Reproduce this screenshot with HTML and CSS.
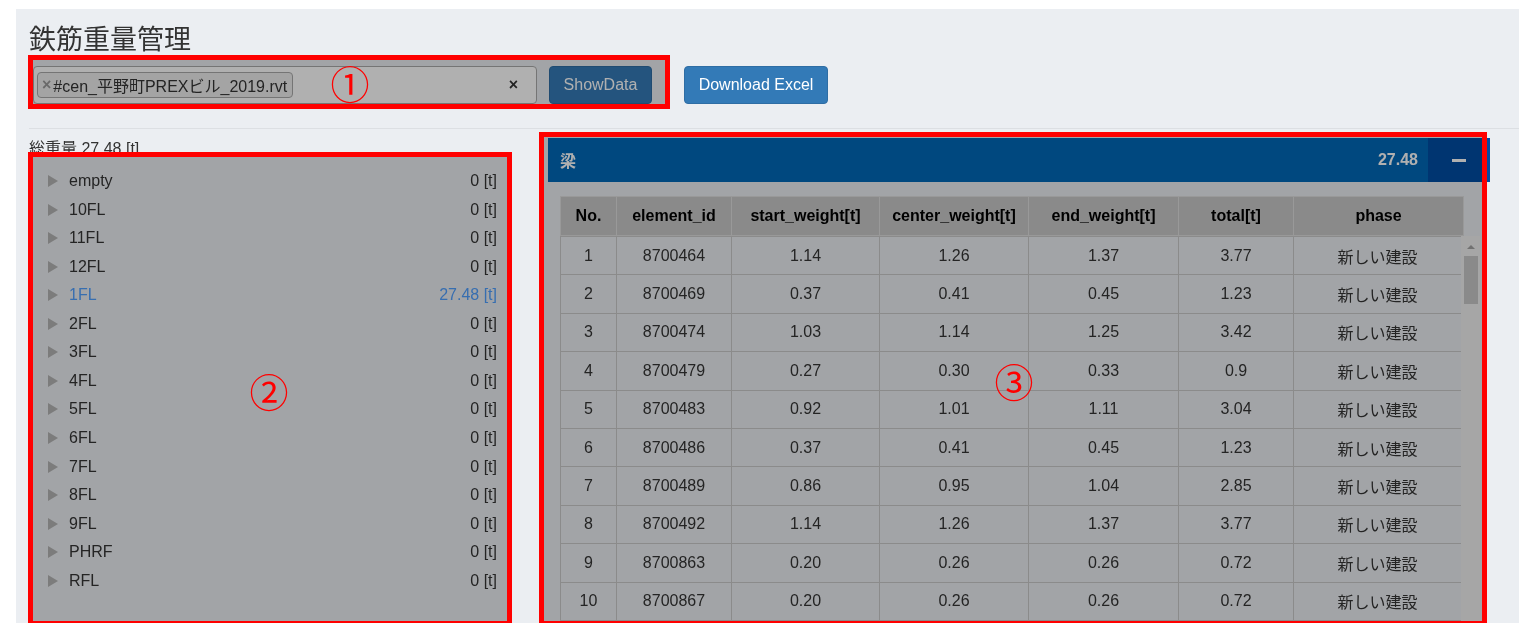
FILE: index.html
```html
<!DOCTYPE html>
<html lang="ja">
<head>
<meta charset="utf-8">
<title>鉄筋重量管理</title>
<link rel="stylesheet" href="styles.css">
</head>
<body>
<div class="page">
  <h1 class="title">鉄筋重量管理</h1>
  <div class="toolbar">
    <div class="select">
      <span class="chip"><span class="chip-x">×</span>#cen_平野町PREXビル_2019.rvt</span>
      <span class="clear">×</span>
    </div>
    <button class="btn btn-show">ShowData</button>
    <button class="btn btn-dl">Download Excel</button>
  </div>
  <div class="rule"></div>
  <div class="content">
    <div class="left">
      <div class="total">総重量 27.48 [t]</div>
      <ul class="tree">
        <li><span class="caret"></span><span class="name">empty</span><span class="val">0 [t]</span></li>
        <li><span class="caret"></span><span class="name">10FL</span><span class="val">0 [t]</span></li>
        <li><span class="caret"></span><span class="name">11FL</span><span class="val">0 [t]</span></li>
        <li><span class="caret"></span><span class="name">12FL</span><span class="val">0 [t]</span></li>
        <li class="sel"><span class="caret"></span><span class="name">1FL</span><span class="val">27.48 [t]</span></li>
        <li><span class="caret"></span><span class="name">2FL</span><span class="val">0 [t]</span></li>
        <li><span class="caret"></span><span class="name">3FL</span><span class="val">0 [t]</span></li>
        <li><span class="caret"></span><span class="name">4FL</span><span class="val">0 [t]</span></li>
        <li><span class="caret"></span><span class="name">5FL</span><span class="val">0 [t]</span></li>
        <li><span class="caret"></span><span class="name">6FL</span><span class="val">0 [t]</span></li>
        <li><span class="caret"></span><span class="name">7FL</span><span class="val">0 [t]</span></li>
        <li><span class="caret"></span><span class="name">8FL</span><span class="val">0 [t]</span></li>
        <li><span class="caret"></span><span class="name">9FL</span><span class="val">0 [t]</span></li>
        <li><span class="caret"></span><span class="name">PHRF</span><span class="val">0 [t]</span></li>
        <li><span class="caret"></span><span class="name">RFL</span><span class="val">0 [t]</span></li>
      </ul>
    </div>
    <div class="panel">
      <div class="panel-head">
        <span class="ph-title">梁</span>
        <span class="ph-total">27.48</span>
        <span class="ph-btn"><span class="minus"></span></span>
      </div>
      <div class="panel-body">
        <table class="thead">
          <colgroup><col class="c1"><col class="c2"><col class="c3"><col class="c4"><col class="c5"><col class="c6"><col class="c7h"></colgroup>
          <tr><th>No.</th><th>element_id</th><th>start_weight[t]</th><th>center_weight[t]</th><th>end_weight[t]</th><th>total[t]</th><th>phase</th></tr>
        </table>
        <div class="scroll">
          <div class="clip">
            <table class="tbody">
              <colgroup><col class="c1"><col class="c2"><col class="c3"><col class="c4"><col class="c5"><col class="c6"><col class="c7"></colgroup>
              <tr><td>1</td><td>8700464</td><td>1.14</td><td>1.26</td><td>1.37</td><td>3.77</td><td>新しい建設</td></tr>
              <tr><td>2</td><td>8700469</td><td>0.37</td><td>0.41</td><td>0.45</td><td>1.23</td><td>新しい建設</td></tr>
              <tr><td>3</td><td>8700474</td><td>1.03</td><td>1.14</td><td>1.25</td><td>3.42</td><td>新しい建設</td></tr>
              <tr><td>4</td><td>8700479</td><td>0.27</td><td>0.30</td><td>0.33</td><td>0.9</td><td>新しい建設</td></tr>
              <tr><td>5</td><td>8700483</td><td>0.92</td><td>1.01</td><td>1.11</td><td>3.04</td><td>新しい建設</td></tr>
              <tr><td>6</td><td>8700486</td><td>0.37</td><td>0.41</td><td>0.45</td><td>1.23</td><td>新しい建設</td></tr>
              <tr><td>7</td><td>8700489</td><td>0.86</td><td>0.95</td><td>1.04</td><td>2.85</td><td>新しい建設</td></tr>
              <tr><td>8</td><td>8700492</td><td>1.14</td><td>1.26</td><td>1.37</td><td>3.77</td><td>新しい建設</td></tr>
              <tr><td>9</td><td>8700863</td><td>0.20</td><td>0.26</td><td>0.26</td><td>0.72</td><td>新しい建設</td></tr>
              <tr><td>10</td><td>8700867</td><td>0.20</td><td>0.26</td><td>0.26</td><td>0.72</td><td>新しい建設</td></tr>
            </table>
          </div>
          <div class="sbar"><span class="sbar-up"></span><span class="sbar-thumb"></span></div>
        </div>
      </div>
    </div>
  </div>
  <div class="mark mark1"><span class="num num1">①</span></div>
  <div class="mark mark2"><span class="num num2">②</span></div>
  <div class="mark mark3"><span class="num num3">③</span></div>
</div>
</body>
</html>
```

FILE: styles.css
```css
* { box-sizing: border-box; }
html, body { margin: 0; background: #fff; }
body {
  font-family: "Liberation Sans", "Noto Sans CJK JP", sans-serif;
  font-size: 16px;
  color: #333;
}
.page {
  position: relative;
  margin: 9px 15px 0 16px;
  height: 614px;
  background: #ebeef2;
  padding: 13px 0 0 13px;
}
.title {
  margin: 0;
  font-size: 27px;
  line-height: 36px;
  font-weight: normal;
  color: #333;
}
.toolbar {
  display: flex;
  align-items: center;
  margin-top: 8px;
  height: 38px;
}
.select {
  display: flex;
  align-items: center;
  margin-left: 4px;
  width: 504px;
  height: 38px;
  border: 1px solid #aaa;
  border-radius: 4px;
  background: #fff;
  padding: 0 18px 0 3px;
}
.chip {
  display: inline-flex;
  align-items: center;
  height: 26px;
  padding: 0 5px 0 4px;
  border: 1px solid #aaa;
  border-radius: 4px;
  background: #eee;
  white-space: nowrap;
}
.chip-x { color: #999; font-weight: bold; margin-right: 2px; }
.clear { margin-left: auto; font-weight: bold; color: #333; }
.btn {
  height: 38px;
  border: 1px solid #2e6da4;
  border-radius: 4px;
  background: #337ab7;
  color: #fff;
  font: 16px "Liberation Sans", sans-serif;
  padding: 0;
}
.btn-show { margin-left: 12px; width: 103px; }
.btn-dl { margin-left: 32px; width: 144px; }
.rule { height: 1px; background: #dcdfe3; margin-top: 24px; }
.content {
  display: grid;
  grid-template-columns: 472px 942px;
  column-gap: 47px;
  margin-top: 9px;
}
.total { line-height: 22px; }
.tree {
  list-style: none;
  margin: 6.7px 0 0;
  padding: 0 4px 0 19px;
}
.tree li { display: flex; align-items: center; height: 28.57px; }
.caret {
  width: 0; height: 0;
  border-left: 10px solid #b3b3b3;
  border-top: 6.5px solid transparent;
  border-bottom: 6.5px solid transparent;
  margin-right: 11px;
}
.val { margin-left: auto; }
.tree .sel { color: #4f9fff; }
.panel-head {
  display: flex;
  align-items: center;
  height: 44px;
  background: #0068b8;
  color: #fff;
  font-weight: bold;
}
.ph-title { padding-left: 12px; }
.ph-total { margin-left: auto; margin-right: 10px; }
.ph-btn {
  width: 62px; height: 44px;
  background: #004ca4;
  display: flex; align-items: center; justify-content: center;
}
.minus { width: 14px; height: 3px; background: #fff; }
.panel-body { padding: 14px 10px 0 12px; }
table { border-collapse: collapse; table-layout: fixed; }
.c1 { width: 56px; } .c2 { width: 115px; } .c3 { width: 148px; } .c4 { width: 149px; }
.c5 { width: 150px; } .c6 { width: 115px; } .c7 { width: 168px; } .c7h { width: 170px; }
.thead { width: 903px; }
.thead th {
  height: 39px;
  background: #c8c8c8;
  border: 1px solid #dedede;
  color: #000;
  font-weight: bold;
  text-align: center;
  padding: 0;
}
.scroll { display: flex; height: 386px; }
.clip { width: 901px; overflow: hidden; }
.tbody { width: 901px; }
.tbody tr { height: 38.4px; }
.tbody td { border: 1px solid #c9c9c9; text-align: center; padding: 0; }
.sbar {
  width: 19px;
  background: #f1f1f1;
  display: flex; flex-direction: column; align-items: center;
}
.sbar-up {
  margin-top: 9px;
  width: 0; height: 0;
  border-bottom: 4px solid #a3a3a3;
  border-left: 4px solid transparent;
  border-right: 4px solid transparent;
}
.sbar-thumb { margin-top: 7px; width: 14px; height: 48px; background: #c8c8c8; }
.mark { position: absolute; border: 5px solid #f00; }
.mark::before {
  content: "";
  position: absolute;
  inset: 0;
  background: #b0b0b0;
  mix-blend-mode: multiply;
}
.mark1 { left: 12px; top: 46px; width: 642px; height: 54px; }
.mark2 { left: 12px; top: 143px; width: 484px; height: 474px; }
.mark3 { left: 523px; top: 123px; width: 948px; height: 494px; }
.num {
  position: absolute;
  width: 44px; height: 44px;
  line-height: 44px;
  text-align: center;
  font-family: "Noto Sans CJK JP", sans-serif;
  font-size: 39px;
  color: #f00;
}
.num1 { left: 295px; top: 0; }
.num2 { left: 214px; top: 211px; }
.num3 { left: 448px; top: 221px; }
```
